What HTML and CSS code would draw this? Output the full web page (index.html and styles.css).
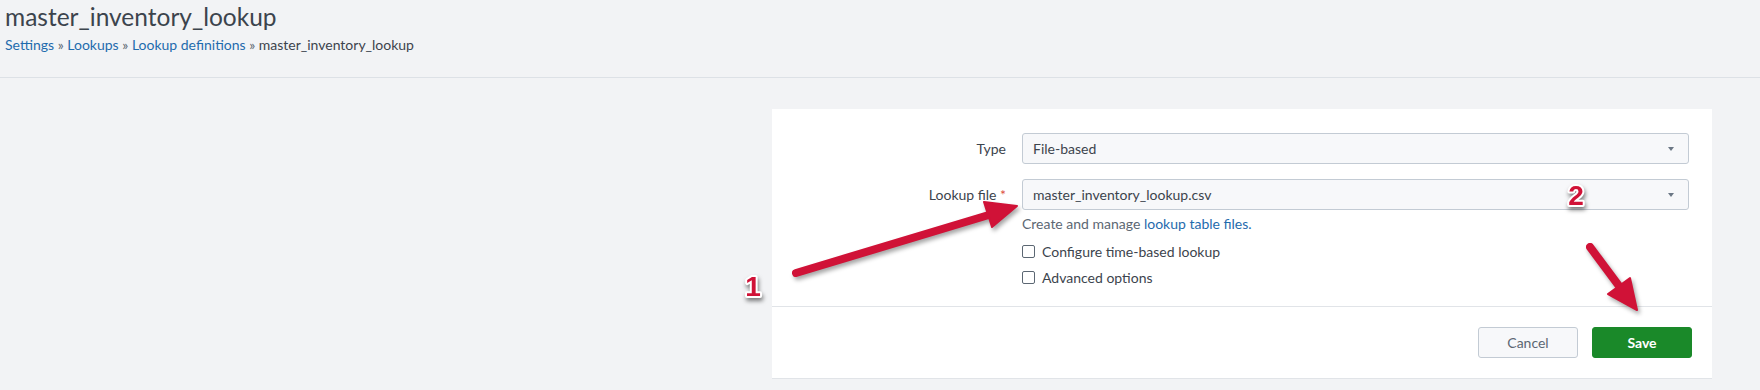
FILE: index.html
```html
<!DOCTYPE html>
<html lang="en">

<head>
    <meta charset="UTF-8">
    <meta name="viewport" content="width=device-width, initial-scale=1.0">
    <title>master_inventory_lookup</title>
    <link rel="stylesheet" href="styles.css">
</head>

<body>
    <div class="page-header">
        <h1 class="page-title">master_inventory_lookup</h1>
        <div class="breadcrumb">
            <a href="#">Settings</a> <span class="sep">»</span>
            <a href="#">Lookups</a> <span class="sep">»</span>
            <a href="#">Lookup definitions</a> <span class="sep">»</span>
            <span class="current">master_inventory_lookup</span>
        </div>
    </div>

    <div class="content">
        <div class="card">
            <div class="card-body">
                <div class="form-row">
                    <label class="form-label">Type</label>
                    <div class="form-control">
                        <div class="select">
                            <span>File-based</span>
                            <span class="caret"></span>
                        </div>
                    </div>
                </div>
                <div class="form-row">
                    <label class="form-label">Lookup file <span class="required">*</span></label>
                    <div class="form-control">
                        <div class="select">
                            <span>master_inventory_lookup.csv</span>
                            <span class="caret"></span>
                        </div>
                        <div class="help">Create and manage <a href="#">lookup table files.</a></div>
                        <label class="check"><span class="box"></span>Configure time-based lookup</label>
                        <label class="check"><span class="box"></span>Advanced options</label>
                    </div>
                </div>
            </div>
            <div class="card-footer">
                <button class="btn">Cancel</button>
                <button class="btn btn-primary">Save</button>
            </div>
        </div>
    </div>

    <!-- annotations drawn over the screenshot -->
    <svg class="annotations" width="1760" height="390" viewBox="0 0 1760 390">
        <g class="arrow">
            <line x1="796" y1="273" x2="992" y2="214" />
            <polygon points="1017,206 992,227 984,202" />
        </g>
        <g class="arrow">
            <line x1="1590" y1="247" x2="1622" y2="290" />
            <polygon points="1637,310 1608,294 1630,278" />
        </g>
        <text class="marker" x="753" y="296">1</text>
        <text class="marker" x="1576" y="205">2</text>
    </svg>
</body>

</html>
```

FILE: styles.css
```css
body {
    font-family: Lato, "Liberation Sans", sans-serif;
    background-color: #f2f3f5;
    color: #3c444d;
    margin: 0;
    padding: 0;
    width: 1760px;
    height: 390px;
    overflow: hidden;
    position: relative;
}

a {
    color: #1f6bad;
    text-decoration: none;
}

.page-header {
    padding: 2px 5px 23px;
    border-bottom: 1px solid #dde1e6;
}

.page-title {
    margin: 0;
    font-size: 24.5px;
    font-weight: 400;
    line-height: 30px;
    color: #3c444d;
}

.breadcrumb {
    margin-top: 4px;
    font-size: 14px;
    line-height: 18px;
}

.breadcrumb .sep {
    color: #5c6773;
}

.breadcrumb .current {
    color: #3c444d;
}

.content {
    display: flex;
    justify-content: flex-end;
    padding: 31px 48px 0 0;
}

.card {
    width: 940px;
    background: #ffffff;
    border-bottom: 1px solid #e1e4e8;
}

.card-body {
    padding: 24px 23px 16px 0;
    display: flex;
    flex-direction: column;
    gap: 15px;
}

.form-row {
    display: flex;
    font-size: 14px;
}

.form-label {
    width: 234px;
    padding-right: 16px;
    text-align: right;
    line-height: 31px;
    color: #3c444d;
}

.required {
    color: #dc4e41;
}

.form-control {
    flex: 1;
}

.select {
    height: 29px;
    border: 1px solid #c3cbd4;
    border-radius: 3px;
    background: #f7f8fa;
    display: flex;
    align-items: center;
    justify-content: space-between;
    padding: 0 14px 0 10px;
    color: #3c444d;
}

.caret {
    width: 0;
    height: 0;
    border-left: 3px solid transparent;
    border-right: 3px solid transparent;
    border-top: 4px solid #6b7785;
}

.help {
    margin-top: 5px;
    line-height: 17px;
    color: #5c6773;
    margin-bottom: 6px;
}

.check {
    display: flex;
    align-items: center;
    height: 26px;
    color: #3c444d;
}

.check .box {
    width: 11px;
    height: 11px;
    border: 1px solid #5c6773;
    border-radius: 2px;
    margin-right: 7px;
    background: #ffffff;
}

.card-footer {
    border-top: 1px solid #e1e4e8;
    padding: 20px 20px 20px 0;
    display: flex;
    justify-content: flex-end;
    gap: 14px;
}

.btn {
    width: 100px;
    height: 31px;
    border: 1px solid #c3cbd4;
    border-radius: 3px;
    background: #f7f8fa;
    color: #5c6773;
    font-family: Lato, "Liberation Sans", sans-serif;
    font-size: 14px;
    cursor: pointer;
}

.btn-primary {
    background: #1a8929;
    border-color: #1a8929;
    color: #ffffff;
    font-weight: bold;
}

.annotations {
    position: absolute;
    top: 0;
    left: 0;
    pointer-events: none;
}

.arrow {
    filter: drop-shadow(2px 3px 2px rgba(0, 0, 0, 0.35));
}

.arrow line {
    stroke: #d01237;
    stroke-width: 8;
    stroke-linecap: round;
}

.arrow polygon {
    fill: #d01237;
    stroke: #d01237;
    stroke-width: 2;
    stroke-linejoin: round;
}

.marker {
    font-family: "Liberation Sans", sans-serif;
    font-size: 28px;
    font-weight: bold;
    text-anchor: middle;
    fill: #d01237;
    stroke: #ffffff;
    stroke-width: 4;
    stroke-linejoin: round;
    paint-order: stroke;
    filter: drop-shadow(1px 3px 2px rgba(0, 0, 0, 0.5));
}
```
